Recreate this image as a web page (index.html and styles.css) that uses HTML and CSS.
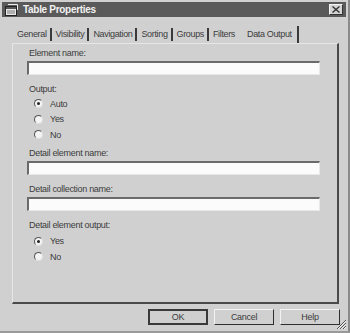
FILE: index.html
```html
<!DOCTYPE html>
<html>
<head>
<meta charset="utf-8">
<link rel="stylesheet" href="styles.css">
</head>
<body>
<div class="win">
  <div class="titlebar">
    <svg class="appicon" width="13" height="12" viewBox="0 0 13 12">
      <rect x="0.5" y="2.5" width="11" height="9" fill="#e8e8e8" stroke="#222"/>
      <rect x="1" y="3" width="10" height="2" fill="#555"/>
      <path d="M3 0.5 L12.5 0.5 L12.5 6" fill="none" stroke="#eee" stroke-width="1"/>
      <line x1="2" y1="7" x2="10" y2="7" stroke="#777"/>
      <line x1="2" y1="9" x2="10" y2="9" stroke="#777"/>
    </svg>
    <span class="title">Table Properties</span>
    <span class="close">
      <svg width="8" height="7" viewBox="0 0 8 7"><path d="M0.5 0.5 L7.5 6.5 M7.5 0.5 L0.5 6.5" stroke="#333" stroke-width="1.4"/></svg>
    </span>
  </div>
  <div class="tabs">
    <span class="tab">General</span>
    <span class="tab">Visibility</span>
    <span class="tab">Navigation</span>
    <span class="tab">Sorting</span>
    <span class="tab">Groups</span>
    <span class="tab">Filters</span>
    <span class="tab active">Data Output</span>
  </div>
  <div class="panel">
    <div class="label first">Element name:</div>
    <div class="input"></div>
    <div class="label gap">Output:</div>
    <div class="radios">
      <div class="radio"><span class="dot on"></span>Auto</div>
      <div class="radio"><span class="dot"></span>Yes</div>
      <div class="radio"><span class="dot"></span>No</div>
    </div>
    <div class="label gap-s">Detail element name:</div>
    <div class="input"></div>
    <div class="label gap">Detail collection name:</div>
    <div class="input"></div>
    <div class="label gap">Detail element output:</div>
    <div class="radios r2">
      <div class="radio"><span class="dot on"></span>Yes</div>
      <div class="radio"><span class="dot"></span>No</div>
    </div>
  </div>
  <div class="buttons">
    <span class="btn default">OK</span>
    <span class="btn">Cancel</span>
    <span class="btn">Help</span>
  </div>
  <svg class="grip" width="11" height="11" viewBox="0 0 11 11">
    <path d="M10 1 L1 10 M10 4 L4 10 M10 7 L7 10" stroke="#555" stroke-width="1"/>
    <path d="M10 2 L2 10 M10 5 L5 10 M10 8 L8 10" stroke="#f0f0f0" stroke-width="1"/>
  </svg>
</div>
</body>
</html>
```

FILE: styles.css
```css
html, body {
  margin: 0;
  padding: 0;
  background: #cfcfcf;
}
.win {
  position: relative;
  width: 350px;
  height: 333px;
  box-sizing: border-box;
  padding: 2px 2px 0 2px;
  background: #d0d0d0;
  border-right: 2px solid #8a8a8a;
  border-bottom: 2px solid #9a9a9a;
  font-family: "Liberation Sans", Arial, sans-serif;
  font-size: 9px;
  letter-spacing: -0.3px;
  color: #3c3c3c;
}
.titlebar {
  height: 15px;
  background: #5a5a5a;
  display: flex;
  align-items: center;
  padding-left: 3px;
}
.appicon {
  flex: none;
}
.title {
  margin-left: 5px;
  font-weight: bold;
  font-size: 10px;
  letter-spacing: -0.3px;
  color: #f2f2f2;
}
.close {
  margin-left: auto;
  margin-right: 3px;
  width: 14px;
  height: 11px;
  background: #d4d4d4;
  border: 1px solid;
  border-color: #f4f4f4 #333 #333 #f4f4f4;
  box-sizing: border-box;
  display: flex;
  align-items: center;
  justify-content: center;
}
.tabs {
  margin-top: 8px;
  height: 18px;
  display: flex;
  align-items: center;
  padding-left: 11px;
  letter-spacing: -0.35px;
}
.tab {
  display: flex;
  align-items: center;
  height: 13px;
  padding: 0 3px 0 4px;
  border-right: 2px solid #3a3a3a;
}
.tab:nth-child(6) {
  border-right-color: transparent;
  padding-right: 6px;
}
.tab.active {
  height: 17px;
  padding: 0 5px 0 4px;
}
.panel {
  margin-left: 10px;
  width: 310px;
  height: 255px;
  border-left: 1px solid #e6e6e6;
  border-top: 1px solid #e6e6e6;
  border-right: 2px solid #4a4a4a;
  border-bottom: 2px solid #4a4a4a;
  padding: 3px 0 0 14px;
  box-sizing: content-box;
}
.label {
  height: 13px;
  line-height: 13px;
  padding-left: 2px;
}
.label.gap { margin-top: 8px; }
.label.gap-s { margin-top: 4px; }
.input {
  margin-top: 1px;
  width: 293px;
  height: 14px;
  box-sizing: border-box;
  background: #fbfbfb;
  border-top: 2px solid #6a6a6a;
  border-left: 2px solid #6a6a6a;
  border-right: 1px solid #e8e8e8;
  border-bottom: 1px solid #e8e8e8;
}
.radios {
  padding-left: 7px;
}
.radios.r2 { margin-top: 2px; }
.radio {
  height: 15.5px;
  display: flex;
  align-items: center;
}
.dot {
  width: 7px;
  height: 7px;
  border-radius: 50%;
  background: #f4f4f4;
  border: 1px solid #555;
  border-right-color: #ddd;
  border-bottom-color: #ddd;
  margin-right: 7px;
  position: relative;
}
.dot.on::after {
  content: "";
  position: absolute;
  left: 2px;
  top: 2px;
  width: 3px;
  height: 3px;
  border-radius: 50%;
  background: #222;
}
.buttons {
  display: flex;
  justify-content: flex-end;
  gap: 6px;
  margin-top: 5px;
  padding-right: 6px;
}
.btn {
  width: 60px;
  height: 16px;
  box-sizing: border-box;
  display: flex;
  align-items: center;
  justify-content: center;
  border: 1px solid;
  border-color: #f2f2f2 #2e2e2e #2e2e2e #f2f2f2;
}
.btn.default {
  border: 2px solid #3a3a3a;
}
.grip {
  position: absolute;
  right: 1px;
  bottom: 1px;
}
```
